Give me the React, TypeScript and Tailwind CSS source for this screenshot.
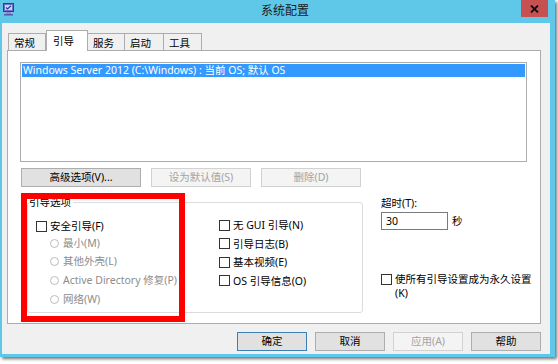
const font = "font-['Noto_Sans','Noto_Sans_CJK_SC',sans-serif]";

function Checkbox() {
  return <span className="w-[11px] h-[11px] border border-[#333] bg-white shrink-0" />;
}

function Radio() {
  return <span className="w-[9px] h-[9px] rounded-full border border-[#bcbcbc] bg-white shrink-0" />;
}

function Btn({
  label,
  w,
  disabled = false,
  primary = false,
}: {
  label: string;
  w: string;
  disabled?: boolean;
  primary?: boolean;
}) {
  const base = "h-[19px] flex items-center justify-center text-[10.5px] leading-none border";
  const look = disabled
    ? "bg-[#f4f4f4] border-[#d2d2d2] text-[#a3a3a3]"
    : primary
      ? "bg-[#e1e1e1] border-[#3c7fb1] text-black"
      : "bg-[#e1e1e1] border-[#adadad] text-black";
  return <div className={`${base} ${look} ${w}`}>{label}</div>;
}

function AppIcon() {
  return (
    <svg width="11" height="13" viewBox="0 0 11 13">
      <rect x="0.5" y="0.5" width="10" height="8" fill="#6d6fc9" stroke="#3a3c8a" />
      <rect x="2" y="2" width="7" height="5" fill="#c9d4f5" />
      <path d="M3 4.5 L4.5 6 L8 2.8" stroke="#2f3a9a" strokeWidth="1.2" fill="none" />
      <rect x="3" y="9" width="5" height="2" fill="#8a8cc8" />
      <rect x="1" y="11" width="9" height="1.5" fill="#5557a8" />
    </svg>
  );
}

export default function App() {
  const tabs = [
    { t: "常规", w: "w-[38px]" },
    { t: "引导", w: "w-[42px]", active: true },
    { t: "服务", w: "w-[38px]" },
    { t: "启动", w: "w-[40px]" },
    { t: "工具", w: "w-[39px]" },
  ];

  return (
    <div className={`relative w-[558px] h-[364px] bg-white ${font}`}>
      {/* window frame */}
      <div className="w-[555px] h-[357px] bg-[#5fc8e8] flex flex-col shadow-[2px_2px_3px_rgba(0,0,0,0.55)]">
        {/* title bar */}
        <div className="h-[23px] flex items-start shrink-0">
          <div className="pl-[3px] pt-[3px] w-[40px]">
            <AppIcon />
          </div>
          <div className="flex-1 text-center text-[12px] leading-none pt-[5px] pl-[9px] text-[#1a1a1a]">系统配置</div>
          <div className="w-[27px] h-[17px] mr-[7px] bg-[#c75050] flex items-center justify-center">
            <svg width="9" height="8" viewBox="0 0 9 8">
              <path d="M1 0.5 L8 7.5 M8 0.5 L1 7.5" stroke="#111" strokeWidth="1.8" />
            </svg>
          </div>
        </div>

        {/* client area */}
        <div className="flex-1 ml-[2px] mr-[5px] mb-[3px] bg-[#f0f0f0] pl-[5px] pr-[9px] pt-[7px] flex flex-col">
          {/* tabs */}
          <div className="flex items-end h-[20px] pl-[1px] relative z-10">
            {tabs.map((tab) =>
              tab.active ? (
                <div
                  key={tab.t}
                  className={`${tab.w} h-[21px] -mb-px bg-white border border-b-0 border-[#acacac] text-[10.5px] leading-none pl-[6px] pt-[5px]`}
                >
                  {tab.t}
                </div>
              ) : (
                <div
                  key={tab.t}
                  className={`${tab.w} h-[18px] -mb-px bg-[#f0f0f0] border border-[#acacac] text-[10.5px] leading-none pl-[5px] pt-[4px] -ml-px first:ml-0`}
                >
                  {tab.t}
                </div>
              ),
            )}
          </div>

          {/* tab panel */}
          <div className="w-[534px] h-[274px] bg-white border border-[#acacac] pl-[12px] pt-[11px] flex flex-col">
            {/* boot list */}
            <div className="w-[507px] h-[100px] border border-[#acacac] p-px">
              <div className="h-[13px] bg-[#3399ff] text-white text-[10.5px] leading-[13px] pl-[1px] whitespace-nowrap">
                Windows Server 2012 (C:\Windows) : 当前 OS; 默认 OS
              </div>
            </div>

            {/* list buttons */}
            <div className="flex gap-[10px] mt-[6px] pl-px">
              <Btn label="高级选项(V)..." w="w-[120px]" />
              <Btn label="设为默认值(S)" w="w-[100px]" disabled />
              <Btn label="删除(D)" w="w-[100px]" disabled />
            </div>

            {/* lower area */}
            <div className="flex mt-[10px]">
              {/* boot options group */}
              <div className="relative ml-[7px] mt-[5px] w-[336px] h-[111px] shrink-0 border border-[#dcdcdc] rounded-[3px] flex pl-[8px] pt-[14px]">
                <span className="absolute left-px -top-[7px] bg-white pr-[2px] text-[10.5px] leading-[13px] text-black">引导选项</span>

                <div className="w-[183px] flex flex-col text-[10.5px] leading-none">
                  <div className="h-[18px] flex items-center gap-[3px]">
                    <Checkbox />
                    <span>安全引导(F)</span>
                  </div>
                  <div className="h-[17px] flex items-center gap-[4px] pl-[14px] text-[#8d8d8d]">
                    <Radio />
                    <span>最小(M)</span>
                  </div>
                  <div className="h-[19px] flex items-center gap-[4px] pl-[14px] text-[#8d8d8d]">
                    <Radio />
                    <span>其他外壳(L)</span>
                  </div>
                  <div className="h-[19px] flex items-center gap-[4px] pl-[14px] text-[#8d8d8d]">
                    <Radio />
                    <span>Active Directory 修复(P)</span>
                  </div>
                  <div className="h-[19px] flex items-center gap-[4px] pl-[14px] text-[#8d8d8d]">
                    <Radio />
                    <span>网络(W)</span>
                  </div>
                </div>

                <div className="flex flex-col text-[10.5px] leading-none -mt-px">
                  {["无 GUI 引导(N)", "引导日志(B)", "基本视频(E)", "OS 引导信息(O)"].map((t) => (
                    <div key={t} className="h-[18.5px] flex items-center gap-[3px]">
                      <Checkbox />
                      <span>{t}</span>
                    </div>
                  ))}
                </div>
              </div>

              {/* timeout column */}
              <div className="ml-[18px] flex-1 min-w-0 flex flex-col text-[10.5px] leading-none text-black">
                <div className="h-[12px] flex items-center">超时(T):</div>
                <div className="flex items-center gap-[4px] mt-[3px]">
                  <div className="w-[67px] h-[18px] border border-[#7a7a7a] bg-white flex items-center pl-[4px]">30</div>
                  <span>秒</span>
                </div>
                <div className="flex items-start gap-[3px] mt-[42px]">
                  <span className="mt-[2px] shrink-0 flex">
                    <Checkbox />
                  </span>
                  <span className="leading-[14px] whitespace-nowrap">
                    使所有引导设置成为永久设置
                    <br />
                    (K)
                  </span>
                </div>
              </div>
            </div>
          </div>

          {/* dialog buttons */}
          <div className="flex justify-end gap-[8px] mt-[8px] w-[534px]">
            <Btn label="确定" w="w-[70px]" primary />
            <Btn label="取消" w="w-[70px]" />
            <Btn label="应用(A)" w="w-[70px]" disabled />
            <Btn label="帮助" w="w-[70px]" />
          </div>
        </div>
      </div>

      {/* red annotation frame */}
      <div className="absolute left-[21px] top-[193px] w-[164px] h-[129px] border-[6px] border-[#ff0000]" />
    </div>
  );
}
